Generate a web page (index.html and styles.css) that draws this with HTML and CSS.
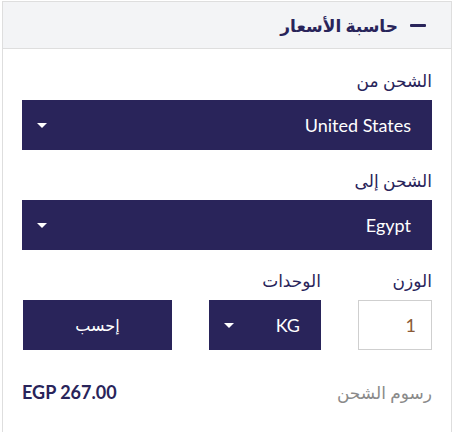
FILE: index.html
```html
<!DOCTYPE html>
<html lang="ar" dir="rtl">
<head>
  <meta charset="UTF-8">
  <meta name="viewport" content="width=device-width, initial-scale=1.0">
  <title>حاسبة الأسعار</title>
  <link rel="stylesheet" href="styles.css">
</head>
<body>
  <!-- Price Calculator -->
  <div class="calc-panel">
    <div class="calc-header">
      <span class="toggle-icon"></span>
      <h2>حاسبة الأسعار</h2>
    </div>

    <div class="calc-body">
      <!-- From -->
      <label class="field-label">الشحن من</label>
      <div class="select-box">
        <span class="select-value">United States</span>
        <span class="caret"></span>
      </div>

      <!-- To -->
      <label class="field-label">الشحن إلى</label>
      <div class="select-box">
        <span class="select-value">Egypt</span>
        <span class="caret"></span>
      </div>

      <!-- Weight / Units / Calculate -->
      <div class="calc-row">
        <div class="weight-col">
          <label class="field-label">الوزن</label>
          <div class="weight-input">1</div>
        </div>
        <div class="units-col">
          <label class="field-label">الوحدات</label>
          <div class="select-box units-box">
            <span class="select-value">KG</span>
            <span class="caret"></span>
          </div>
        </div>
        <button type="button" class="calc-btn">إحسب</button>
      </div>

      <!-- Result -->
      <div class="result-row">
        <span class="result-label">رسوم الشحن</span>
        <span class="result-value">EGP 267.00</span>
      </div>
    </div>
  </div>
</body>
</html>
```

FILE: styles.css
```css
body {
  margin: 0;
  padding: 1px 3px 0 2px;
  font-family: Lato, "DejaVu Sans", sans-serif;
  background: #fff;
  color: #29245a;
}

.calc-panel {
  border: 1px solid #dedede;
  border-bottom: none;
  height: 440px;
}

.calc-header {
  display: flex;
  align-items: center;
  height: 46px;
  padding: 0 25px 0 0;
  background: #f3f4f6;
  border-bottom: 1px solid #dedede;
}

.calc-header h2 {
  margin: 0 12px 0 0;
  font-size: 17px;
  font-weight: bold;
  color: #29245a;
}

.toggle-icon {
  width: 16px;
  height: 3px;
  border-radius: 1px;
  background: #29245a;
}

.calc-body {
  padding: 20px 19px 0 19px;
}

.field-label {
  display: block;
  font-size: 17px;
  font-weight: normal;
  color: #29245a;
  margin-bottom: 8px;
  line-height: 23px;
}

.select-box {
  display: flex;
  align-items: center;
  justify-content: space-between;
  height: 50px;
  padding: 0 21px 0 15px;
  background: #29245a;
  color: #fff;
  font-size: 18px;
  margin-bottom: 19px;
}

.select-value {
  direction: ltr;
}

.caret {
  width: 0;
  height: 0;
  border-left: 5px solid transparent;
  border-right: 5px solid transparent;
  border-top: 5px solid #fff;
}

.calc-row {
  display: flex;
  align-items: flex-end;
}

.weight-col {
  width: 74px;
}

.weight-input {
  height: 48px;
  border: 1px solid #cfcfcf;
  display: flex;
  align-items: center;
  padding-right: 15px;
  font-size: 18px;
  color: #8b5a36;
}

.units-col {
  width: 112px;
  margin-right: 37px;
}

.units-box {
  margin-bottom: 0;
  padding: 0 21px 0 15px;
}

.calc-btn {
  width: 149px;
  height: 50px;
  margin-right: 37px;
  border: none;
  background: #29245a;
  color: #fff;
  font-family: Lato, "DejaVu Sans", sans-serif;
  font-size: 16px;
}

.result-row {
  display: flex;
  align-items: center;
  justify-content: space-between;
  margin-top: 31px;
}

.result-label {
  font-size: 17px;
  color: #8a8a8a;
}

.result-value {
  direction: ltr;
  font-size: 18px;
  font-weight: bold;
  color: #29245a;
}
```
